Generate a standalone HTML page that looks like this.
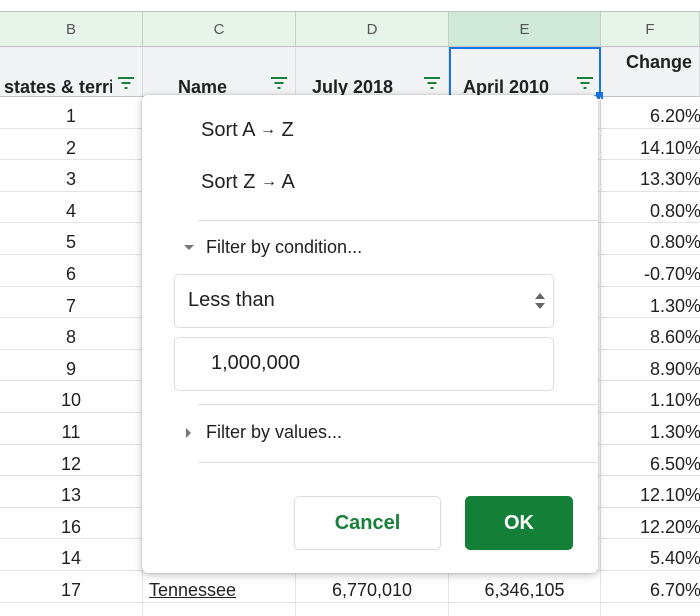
<!DOCTYPE html>
<html><head><style>
*{margin:0;padding:0;box-sizing:border-box}
html,body{width:700px;height:616px;overflow:hidden}
body{background:#fff;font-family:"Liberation Sans",Arial,sans-serif;position:relative;color:#202124}
.a{position:absolute}
.hc{position:absolute;top:12px;height:35px;background:#e6f4ea;border-right:1px solid #c7cdc9;border-bottom:1px solid #c0c4c2;color:#555;font-size:15px;text-align:center;line-height:35px}
.h2{position:absolute;top:47px;height:50px;background:#f1f3f4;border-right:1px solid #dadce0;border-bottom:1px solid #c0c4c2;font-weight:bold;font-size:18px}
.row{position:absolute;left:0;width:700px;height:31.6px;border-bottom:1px solid #e2e3e3;font-size:18px;line-height:31px}
.c{position:absolute;top:0;height:100%;border-right:1px solid #e2e3e3;padding-top:4px}
.fi{position:absolute;width:18px;height:12px}
.fi i{position:absolute;height:2px;background:#188038;left:50%;transform:translateX(-50%)}
.div{position:absolute;left:198px;width:399px;height:1px;background:#dadce0}
</style></head><body>
<div class="a" style="left:0;top:11px;width:700px;height:1px;background:#c0c4c2"></div>
<div class="hc" style="left:0;width:143px">B</div>
<div class="hc" style="left:143px;width:153px">C</div>
<div class="hc" style="left:296px;width:153px">D</div>
<div class="hc" style="left:449px;width:152px;background:#cfe8d7">E</div>
<div class="hc" style="left:601px;width:99px">F</div>

<div class="h2" style="left:0;width:143px"><span class="a" style="left:4px;top:30px;white-space:nowrap;width:108px;overflow:hidden">states &amp; territories</span></div>
<div class="h2" style="left:143px;width:153px"><span class="a" style="left:35px;top:30px">Name</span></div>
<div class="h2" style="left:296px;width:153px"><span class="a" style="left:16px;top:30px">July 2018</span></div>
<div class="h2" style="left:449px;width:152px;border:2px solid #1a73e8"><span class="a" style="left:12px;top:28px">April 2010</span></div>
<div class="h2" style="left:601px;width:99px"><span class="a" style="left:25px;top:5px">Change</span></div>
<div class="a" style="left:596px;top:92px;width:7px;height:7px;background:#1a73e8"></div>

<div class="fi" style="left:117px;top:77px"><i style="top:0;width:16px"></i><i style="top:5px;width:9px"></i><i style="top:10px;width:3px"></i></div>
<div class="fi" style="left:270px;top:77px"><i style="top:0;width:16px"></i><i style="top:5px;width:9px"></i><i style="top:10px;width:3px"></i></div>
<div class="fi" style="left:423px;top:77px"><i style="top:0;width:16px"></i><i style="top:5px;width:9px"></i><i style="top:10px;width:3px"></i></div>
<div class="fi" style="left:576px;top:77px"><i style="top:0;width:16px"></i><i style="top:5px;width:9px"></i><i style="top:10px;width:3px"></i></div>

<div id="rows"></div>
<script>
var b=[1,2,3,4,5,6,7,8,9,10,11,12,13,16,14,17,''];
var f=['6.20%','14.10%','13.30%','0.80%','0.80%','-0.70%','1.30%','8.60%','8.90%','1.10%','1.30%','6.50%','12.10%','12.20%','5.40%','6.70%',''];
var h='';
for(var i=0;i<17;i++){
 var t=97+i*31.6;
 h+='<div class="row" style="top:'+t+'px">'+
 '<div class="c" style="left:0;width:143px;text-align:center">'+b[i]+'</div>'+
 '<div class="c" style="left:143px;width:153px;padding-left:6px">'+(i==15?'<u>Tennessee</u>':'')+'</div>'+
 '<div class="c" style="left:296px;width:153px;text-align:center">'+(i==15?'6,770,010':'')+'</div>'+
 '<div class="c" style="left:449px;width:152px;text-align:center">'+(i==15?'6,346,105':'')+'</div>'+
 '<div class="c" style="left:601px;width:110px;text-align:right;padding-right:10px;border:none">'+f[i]+'</div></div>';
}
document.getElementById('rows').innerHTML=h;
</script>

<div class="a" style="left:142px;top:95px;width:456px;height:478px;background:#fff;border-radius:6px;box-shadow:0 2px 8px rgba(0,0,0,.25),0 0 2px rgba(0,0,0,.15)">
</div>
<div class="a" style="left:201px;top:119px;font-size:20px">Sort A <span style="font-size:16px;position:relative;top:-2px">→</span> Z</div>
<div class="a" style="left:201px;top:171px;font-size:20px">Sort Z <span style="font-size:16px;position:relative;top:-2px">→</span> A</div>
<div class="div" style="top:220px"></div>
<div class="a" style="left:184px;top:245px;width:0;height:0;border-left:5px solid transparent;border-right:5px solid transparent;border-top:5px solid #777"></div>
<div class="a" style="left:206px;top:237px;font-size:18px">Filter by condition...</div>
<div class="a" style="left:174px;top:274px;width:380px;height:54px;border:1px solid #dadce0;border-radius:5px"></div>
<div class="a" style="left:188px;top:289px;font-size:20px">Less than</div>
<div class="a" style="left:535px;top:293px;width:0;height:0;border-left:5px solid transparent;border-right:5px solid transparent;border-bottom:6px solid #666"></div>
<div class="a" style="left:535px;top:303px;width:0;height:0;border-left:5px solid transparent;border-right:5px solid transparent;border-top:6px solid #666"></div>
<div class="a" style="left:174px;top:337px;width:380px;height:54px;border:1px solid #dadce0;border-radius:5px"></div>
<div class="a" style="left:211px;top:352px;font-size:20px">1,000,000</div>
<div class="div" style="top:404px"></div>
<div class="a" style="left:186px;top:428px;width:0;height:0;border-top:5px solid transparent;border-bottom:5px solid transparent;border-left:5px solid #777"></div>
<div class="a" style="left:206px;top:422px;font-size:18px">Filter by values...</div>
<div class="div" style="top:462px"></div>
<div class="a" style="left:294px;top:496px;width:147px;height:54px;border:1px solid #dadce0;border-radius:5px;color:#188038;font-weight:bold;font-size:20px;text-align:center;line-height:52px">Cancel</div>
<div class="a" style="left:465px;top:496px;width:108px;height:54px;background:#137f37;border-radius:5px;color:#fff;font-weight:bold;font-size:20px;text-align:center;line-height:54px">OK</div>
</body></html>
